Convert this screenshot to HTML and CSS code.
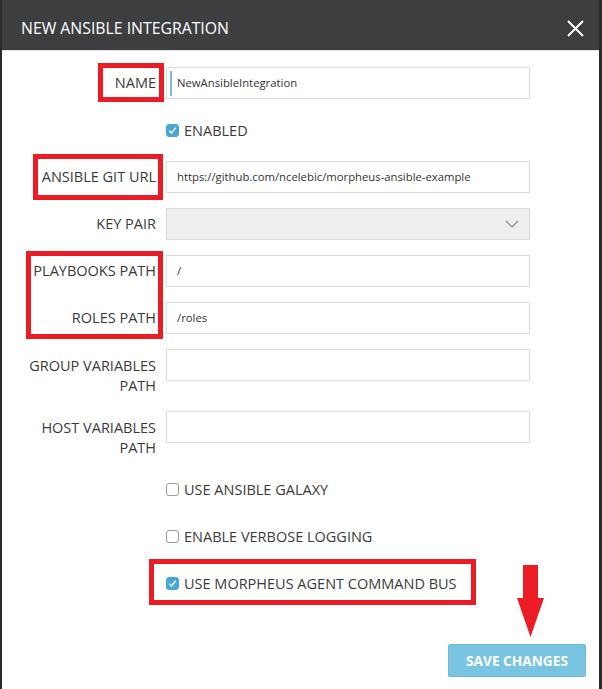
FILE: index.html
```html
<!DOCTYPE html>
<html>
<head>
<meta charset="utf-8">
<link rel="stylesheet" href="styles.css">
</head>
<body>
<div class="modal">
  <div class="modal-header">
    <span class="title">NEW ANSIBLE INTEGRATION</span>
    <svg class="close" width="17" height="17" viewBox="0 0 17 17"><path d="M1 1L16 16M16 1L1 16" stroke="#fff" stroke-width="2" fill="none"/></svg>
  </div>
  <div class="modal-body">
    <div class="row">
      <label class="lbl">NAME</label>
      <div class="field caret">NewAnsibleIntegration</div>
    </div>
    <div class="row">
      <span></span>
      <div class="check"><span class="box on"><svg width="13" height="13" viewBox="0 0 13 13"><path d="M3.2 6.8L5.4 9L9.8 3.8" stroke="#fff" stroke-width="1.4" fill="none"/></svg></span>ENABLED</div>
    </div>
    <div class="row">
      <label class="lbl">ANSIBLE GIT URL</label>
      <div class="field">https://github.com/ncelebic/morpheus-ansible-example</div>
    </div>
    <div class="row">
      <label class="lbl">KEY PAIR</label>
      <div class="field select"><svg width="14" height="8" viewBox="0 0 14 8"><path d="M1 1L7 7L13 1" stroke="#8a8a8a" stroke-width="1.2" fill="none"/></svg></div>
    </div>
    <div class="row">
      <label class="lbl">PLAYBOOKS PATH</label>
      <div class="field">/</div>
    </div>
    <div class="row">
      <label class="lbl">ROLES PATH</label>
      <div class="field">/roles</div>
    </div>
    <div class="row">
      <label class="lbl tall">GROUP VARIABLES PATH</label>
      <div class="field"></div>
    </div>
    <div class="row">
      <label class="lbl tall">HOST VARIABLES PATH</label>
      <div class="field"></div>
    </div>
    <div class="row">
      <span></span>
      <div class="check"><span class="box"></span>USE ANSIBLE GALAXY</div>
    </div>
    <div class="row">
      <span></span>
      <div class="check"><span class="box"></span>ENABLE VERBOSE LOGGING</div>
    </div>
    <div class="row">
      <span></span>
      <div class="check"><span class="box on"><svg width="13" height="13" viewBox="0 0 13 13"><path d="M3.2 6.8L5.4 9L9.8 3.8" stroke="#fff" stroke-width="1.4" fill="none"/></svg></span>USE MORPHEUS AGENT COMMAND BUS</div>
    </div>
  </div>
  <div class="modal-footer">
    <button class="btn">SAVE CHANGES</button>
  </div>
</div>
<div class="mark mark-name"></div>
<div class="mark mark-git"></div>
<div class="mark mark-paths"></div>
<div class="mark mark-bus"></div>
<svg class="arrow" width="30" height="74" viewBox="0 0 30 74"><polygon points="7,0 22,0 22,33 28,33 14.5,72 1,33 7,33" fill="#ec1c24"/></svg>
</body>
</html>
```

FILE: styles.css
```css
html, body {
  margin: 0;
  padding: 0;
}
body {
  background: #2a2a2a;
  position: relative;
  width: 602px;
  height: 689px;
  overflow: hidden;
  font-family: "Open Sans", "Liberation Sans", sans-serif;
}
.modal {
  margin-left: 2px;
  width: 597px;
  height: 689px;
  background: #fff;
  display: flex;
  flex-direction: column;
}
.modal-header {
  height: 50px;
  background: #3d3e40;
  border-bottom: 1px solid #dde2e6;
  display: flex;
  align-items: center;
  justify-content: space-between;
  padding: 0 15px 0 19px;
  flex-shrink: 0;
}
.title {
  color: #fff;
  font-size: 15.8px;
  margin-top: 6px;
}
.close {
  margin-top: 6px;
}
.modal-body {
  padding-top: 16px;
  flex-shrink: 0;
}
.row {
  display: grid;
  grid-template-columns: 154px 364px;
  column-gap: 10px;
  margin-bottom: 15px;
  min-height: 32px;
}
.lbl {
  text-align: right;
  font-size: 14.5px;
  line-height: 20px;
  padding-top: 6px;
  color: #3b3b3b;
}
.lbl.tall {
  padding-top: 7px;
}
.field {
  height: 32px;
  box-sizing: border-box;
  border: 1px solid #dcdcdc;
  padding: 0 10px;
  font-size: 11.3px;
  line-height: 30px;
  color: #333;
  white-space: nowrap;
  overflow: hidden;
}
.caret {
  background: linear-gradient(#7fbde0, #7fbde0) no-repeat 3px 3px / 2px 25px;
}
.select {
  background: #eeeeee;
  display: flex;
  align-items: center;
  justify-content: flex-end;
  padding-right: 10px;
}
.check {
  display: flex;
  align-items: center;
  font-size: 14.5px;
  color: #3b3b3b;
  height: 32px;
}
.box {
  width: 13px;
  height: 13px;
  box-sizing: border-box;
  border: 1px solid #9a9a9a;
  border-radius: 3px;
  margin: 0 5px 0 0;
  display: inline-flex;
  background: #fff;
}
.box.on {
  background: #47a7d8;
  border-color: #47a7d8;
}
.box.on svg {
  margin: -1px;
}
.modal-footer {
  display: flex;
  justify-content: flex-end;
  padding: 30px 13px 0 0;
  flex-shrink: 0;
}
.btn {
  width: 138px;
  height: 33px;
  background: #79c4e0;
  border: 1px solid #6dbbd9;
  border-radius: 2px;
  color: #fff;
  font-family: "Open Sans", "Liberation Sans", sans-serif;
  font-weight: bold;
  font-size: 13.7px;
  padding: 0;
}
.mark {
  position: absolute;
  border: 5px solid #ec1c24;
  box-sizing: border-box;
}
.mark-name {
  left: 98px; top: 63px; width: 66px; height: 39px;
}
.mark-git {
  left: 33px; top: 154px; width: 130px; height: 46px;
}
.mark-paths {
  left: 26px; top: 251px; width: 137px; height: 88px;
}
.mark-bus {
  left: 149px; top: 559px; width: 327px; height: 46px;
}
.arrow {
  position: absolute;
  left: 516px;
  top: 565px;
}
```
